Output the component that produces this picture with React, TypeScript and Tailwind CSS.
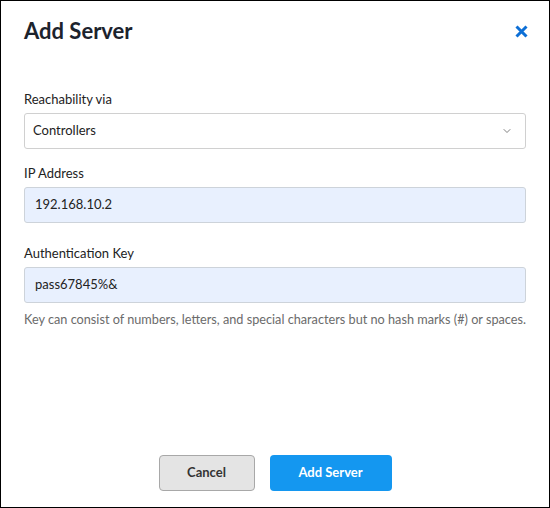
import { ChevronDown } from "lucide-react";

function Field({
  label,
  value,
  className = "",
}: {
  label: string;
  value: string;
  className?: string;
}) {
  return (
    <div className={className}>
      <label className="block text-[13px] leading-5 text-[#222]">{label}</label>
      <div className="mt-1 flex h-9 items-center rounded-[3px] border border-[#cdd3da] bg-[#e8f0fe] px-[10px] text-[13px] text-[#222]">
        {value}
      </div>
    </div>
  );
}

export default function App() {
  return (
    <div
      className="flex h-[508px] w-[550px] flex-col border border-black bg-white"
      style={{ fontFamily: "Lato, 'Open Sans', sans-serif" }}
    >
      <div className="flex items-center justify-between pl-[23px] pr-[21px] pt-4">
        <h1 className="text-[22px] font-bold leading-7 text-[#1c232d]">Add Server</h1>
        <button className="flex h-[14px] w-[14px] items-center justify-center">
          <svg width="13" height="13" viewBox="0 0 13 13">
            <path
              d="M1.5 1.5 L11.5 11.5 M11.5 1.5 L1.5 11.5"
              stroke="#0d6fd6"
              strokeWidth="3"
              strokeLinecap="butt"
            />
          </svg>
        </button>
      </div>

      <div className="mt-[44px] px-[23px]">
        <div>
          <label className="block text-[13px] leading-5 text-[#222]">Reachability via</label>
          <div className="mt-1 flex h-9 items-center justify-between rounded-[3px] border border-[#d0d0d0] bg-white pl-2 pr-3 text-[13px] text-[#222]">
            <span>Controllers</span>
            <ChevronDown size={12} strokeWidth={1.5} className="text-[#555]" />
          </div>
        </div>

        <Field label="IP Address" value="192.168.10.2" className="mt-[14px]" />
        <Field label="Authentication Key" value="pass67845%&" className="mt-5" />

        <p className="mt-2 whitespace-nowrap text-[12.7px] leading-4 text-[#6b6b6b]">
          Key can consist of numbers, letters, and special characters but no hash marks (#) or spaces.
        </p>
      </div>

      <div className="mt-auto flex justify-center gap-[15px] pb-4">
        <button className="h-9 w-24 rounded-[4px] border border-[#a8a8a8] bg-[#e4e4e4] text-[13px] font-bold text-[#333]">
          Cancel
        </button>
        <button className="h-9 w-[122px] rounded-[4px] bg-[#1497f0] text-[13px] font-bold text-white">
          Add Server
        </button>
      </div>
    </div>
  );
}
